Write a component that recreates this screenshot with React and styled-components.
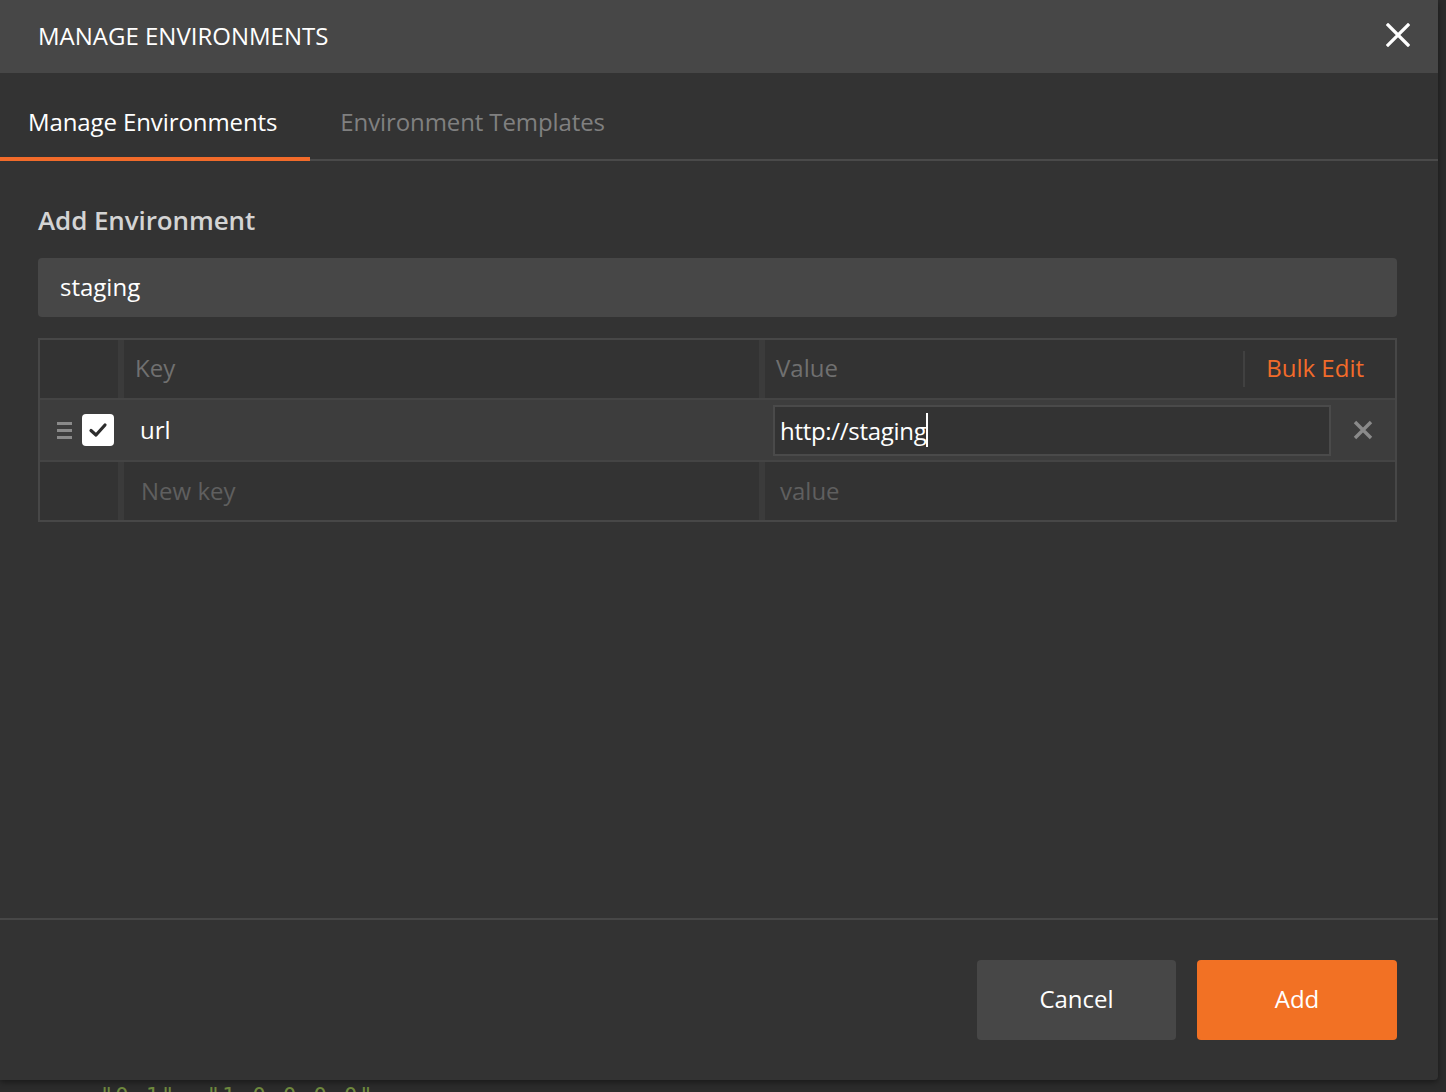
import React from "react";
import styled, { createGlobalStyle } from "styled-components";

const Global = createGlobalStyle`
  html, body { margin: 0; padding: 0; background: #2a2a2a; }
  body { font-family: "Open Sans", "Noto Sans", sans-serif; overflow: hidden; }
  * { box-sizing: border-box; }
`;

const Page = styled.div`
  width: 1446px;
  height: 1092px;
  position: relative;
  background: #2b2b2b;
  overflow: hidden;
`;

const BackdropText = styled.div`
  position: absolute;
  left: 100px;
  top: 1085px;
  font-family: "DejaVu Sans Mono", monospace;
  font-size: 22px;
  line-height: 22px;
  color: #6f8a3e;
  letter-spacing: 2px;
`;

const Modal = styled.div`
  width: 1438px;
  height: 1080px;
  background: #333333;
  display: flex;
  flex-direction: column;
  box-shadow: 0 2px 6px rgba(0, 0, 0, 0.45);
  border-bottom-right-radius: 4px;
  position: relative;
`;

const Header = styled.div`
  height: 73px;
  background: #474747;
  display: flex;
  align-items: center;
  justify-content: space-between;
  padding: 0 28px 0 38px;
`;

const Title = styled.div`
  color: #ffffff;
  font-size: 24px;
  line-height: 1;
  padding-bottom: 2px;
`;

const CloseBtn = styled.button`
  background: none;
  border: none;
  padding: 0;
  width: 24px;
  height: 24px;
  display: flex;
  cursor: pointer;
  margin-bottom: 4px;
`;

const Tabs = styled.div`
  height: 88px;
  display: flex;
  align-items: stretch;
  border-bottom: 2px solid #4a4a4a;
`;

const Tab = styled.div`
  display: flex;
  align-items: center;
  padding: 12px ${(p) => (p.$active ? "33px" : "30px")} 0 ${(p) => (p.$active ? "28px" : "30px")};
  font-size: 24px;
  color: ${(p) => (p.$active ? "#ffffff" : "#808080")};
  border-bottom: 4px solid ${(p) => (p.$active ? "#f26b2a" : "transparent")};
  margin-bottom: -2px;
  letter-spacing: -0.1px;
`;

const Body = styled.div`
  flex: 1;
  padding: 41px 41px 0 38px;
  display: flex;
  flex-direction: column;
`;

const SectionTitle = styled.div`
  font-size: 26px;
  font-weight: 600;
  color: #d4d4d4;
  line-height: 36px;
  margin-bottom: 20px;
  letter-spacing: -0.1px;
`;

const NameInput = styled.div`
  height: 59px;
  background: #474747;
  border-radius: 4px;
  display: flex;
  align-items: center;
  padding: 0 22px;
  font-size: 24px;
  color: #ffffff;
  padding-bottom: 2px;
`;

const Table = styled.div`
  margin-top: 21px;
  border: 2px solid #474747;
  display: flex;
  flex-direction: column;
`;

const Row = styled.div`
  display: grid;
  grid-template-columns: 78px 641px 1fr;
  height: ${(p) => p.$h}px;
  background: ${(p) => (p.$hl ? "#3d3d3d" : "#333333")};
  border-bottom: ${(p) => (p.$last ? "none" : "2px solid #444444")};
`;

const Cell = styled.div`
  display: flex;
  align-items: center;
  border-left: ${(p) => (p.$div ? "6px solid #3b3b3b" : "none")};
  padding-left: ${(p) => p.$pl || 0}px;
  padding-right: ${(p) => p.$pr || 0}px;
  gap: ${(p) => p.$gap || 0}px;
  font-size: 24px;
  color: ${(p) => p.$color || "#ffffff"};
  min-width: 0;
`;

const CellText = styled.span`
  flex: 1;
  padding-bottom: ${(p) => p.$pb ?? 2}px;
`;

const BulkDivider = styled.div`
  width: 2px;
  height: 36px;
  background: #414141;
  margin-right: 21px;
`;

const BulkEdit = styled.span`
  color: #f26b2a;
  font-size: 24px;
  padding-bottom: 4px;
`;

const Handle = styled.div`
  width: 15px;
  display: flex;
  flex-direction: column;
  gap: 4px;
  & > span {
    display: block;
    height: 3px;
    background: #8a8a8a;
  }
`;

const Check = styled.div`
  width: 32px;
  height: 32px;
  background: #ffffff;
  border-radius: 4px;
  display: flex;
  align-items: center;
  justify-content: center;
`;

const ValueBox = styled.div`
  flex: 1;
  height: 51px;
  border: 2px solid #4a4a4a;
  background: #333333;
  display: flex;
  align-items: center;
  padding-left: 5px;
  font-size: 24px;
  color: #ffffff;
  letter-spacing: -0.3px;
`;

const Caret = styled.span`
  display: inline-block;
  width: 2px;
  height: 34px;
  background: #ffffff;
`;

const DeleteBtn = styled.div`
  width: 64px;
  display: flex;
  align-items: center;
  justify-content: center;
`;

const Footer = styled.div`
  height: 162px;
  border-top: 2px solid #474747;
  display: flex;
  justify-content: flex-end;
  align-items: flex-start;
  gap: 21px;
  padding: 40px 41px 0 0;
`;

const Button = styled.button`
  width: ${(p) => (p.$primary ? 200 : 199)}px;
  height: 80px;
  border: none;
  border-radius: 4px;
  background: ${(p) => (p.$primary ? "#f27124" : "#474747")};
  color: #ffffff;
  font-family: "Open Sans", sans-serif;
  font-size: 24px;
  padding-bottom: 4px;
`;

const SideStrip = styled.div`
  position: absolute;
  left: 1438px;
  top: 0;
  width: 8px;
  height: 1092px;
  background: #2b2b2b;
`;

export default function App() {
  return (
    <Page>
      <Global />
      <BackdropText>"0.1", "1.0.0.0.0"</BackdropText>
      <SideStrip />
      <Modal>
        <Header>
          <Title>MANAGE ENVIRONMENTS</Title>
          <CloseBtn aria-label="close">
            <svg width="24" height="24" viewBox="0 0 24 24">
              <path d="M2 2 L22 22 M22 2 L2 22" stroke="#fff" strokeWidth="3.2" strokeLinecap="square" />
            </svg>
          </CloseBtn>
        </Header>
        <Tabs>
          <Tab $active>Manage Environments</Tab>
          <Tab>Environment Templates</Tab>
        </Tabs>
        <Body>
          <SectionTitle>Add Environment</SectionTitle>
          <NameInput>staging</NameInput>
          <Table>
            <Row $h={60}>
              <Cell />
              <Cell $div $pl={11} $color="#707070">
                <CellText $pb={4}>Key</CellText>
              </Cell>
              <Cell $div $pl={11} $pr={31} $color="#707070">
                <CellText $pb={4}>Value</CellText>
                <BulkDivider />
                <BulkEdit>Bulk Edit</BulkEdit>
              </Cell>
            </Row>
            <Row $h={62} $hl>
              <Cell $pl={17} $gap={10}>
                <Handle>
                  <span />
                  <span />
                  <span />
                </Handle>
                <Check>
                  <svg width="20" height="16" viewBox="0 0 20 16">
                    <path d="M3 8.5 L8 13 L17 3" stroke="#2d2d2d" strokeWidth="3.2" fill="none" strokeLinecap="round" strokeLinejoin="round" />
                  </svg>
                </Check>
              </Cell>
              <Cell $pl={22}>
                <CellText>url</CellText>
              </Cell>
              <Cell $pl={14}>
                <ValueBox>
                  <span>http://staging</span>
                  <Caret />
                </ValueBox>
                <DeleteBtn>
                  <svg width="20" height="20" viewBox="0 0 20 20">
                    <path d="M2 2 L18 18 M18 2 L2 18" stroke="#8a8a8a" strokeWidth="3.4" />
                  </svg>
                </DeleteBtn>
              </Cell>
            </Row>
            <Row $h={58} $last>
              <Cell />
              <Cell $div $pl={17} $color="#5f5f5f">
                <CellText>New key</CellText>
              </Cell>
              <Cell $div $pl={15} $color="#5f5f5f">
                <CellText>value</CellText>
              </Cell>
            </Row>
          </Table>
        </Body>
        <Footer>
          <Button>Cancel</Button>
          <Button $primary>Add</Button>
        </Footer>
      </Modal>
    </Page>
  );
}
